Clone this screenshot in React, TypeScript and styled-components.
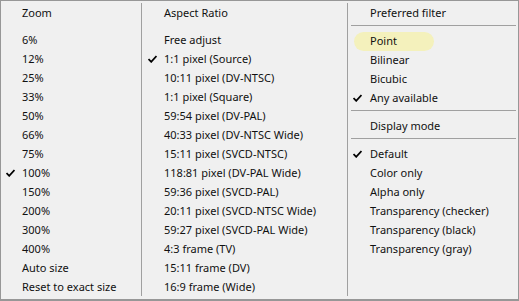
import React from "react";
import styled, { createGlobalStyle } from "styled-components";

const Global = createGlobalStyle`
  html, body { margin: 0; padding: 0; background: #f0f0f0; }
  body { font-family: "Noto Sans", "Open Sans", sans-serif; font-size: 11px; color: #111; }
`;

const Menu = styled.div`
  width: 519px;
  height: 301px;
  box-sizing: border-box;
  border: 1px solid #979797;
  border-bottom-width: 2px;
  background: #f0f0f0;
  display: flex;
  padding: 2px 0 3px;
`;

const Column = styled.div<{ $w: number }>`
  width: ${(p) => p.$w}px;
  display: flex;
  flex-direction: column;
`;

const Divider = styled.div`
  width: 1px;
  background: #a0a0a0;
  flex-shrink: 0;
`;

const Item = styled.div<{ $pad: number; $hl?: boolean }>`
  position: relative;
  height: 19px;
  line-height: 19px;
  padding-left: ${(p) => p.$pad}px;
  white-space: nowrap;
  &::before {
    content: "";
    display: ${(p) => (p.$hl ? "block" : "none")};
    position: absolute;
    left: 6px;
    top: 1px;
    width: 80px;
    height: 19px;
    border-radius: 10px;
    background: #f4f1bc;
  }
`;

const Label = styled.span`
  position: relative;
`;

const Check = styled.svg<{ $x: number }>`
  position: absolute;
  left: ${(p) => p.$x}px;
  top: 6px;
  width: 9px;
  height: 8px;
`;

const Sep = styled.div<{ $l: number; $r: number }>`
  height: 1px;
  background: #a0a0a0;
  margin: 3px ${(p) => p.$r}px 5px ${(p) => p.$l}px;
`;

type Entry = string | { t: string; c?: boolean; h?: boolean } | null;

const cols: { w: number; pad: number; cx: number; sl: number; sr: number; items: Entry[] }[] = [
  {
    w: 140,
    pad: 21,
    cx: 5,
    sl: 3,
    sr: 2,
    items: [
      "Zoom",
      null,
      "6%",
      "12%",
      "25%",
      "33%",
      "50%",
      "66%",
      "75%",
      { t: "100%", c: true },
      "150%",
      "200%",
      "300%",
      "400%",
      "Auto size",
      "Reset to exact size",
    ],
  },
  {
    w: 205,
    pad: 22,
    cx: 6,
    sl: 3,
    sr: 2,
    items: [
      "Aspect Ratio",
      null,
      "Free adjust",
      { t: "1:1 pixel (Source)", c: true },
      "10:11 pixel (DV-NTSC)",
      "1:1 pixel (Square)",
      "59:54 pixel (DV-PAL)",
      "40:33 pixel (DV-NTSC Wide)",
      "15:11 pixel (SVCD-NTSC)",
      "118:81 pixel (DV-PAL Wide)",
      "59:36 pixel (SVCD-PAL)",
      "20:11 pixel (SVCD-NTSC Wide)",
      "59:27 pixel (SVCD-PAL Wide)",
      "4:3 frame (TV)",
      "15:11 frame (DV)",
      "16:9 frame (Wide)",
    ],
  },
  {
    w: 170,
    pad: 22,
    cx: 5,
    sl: 3,
    sr: 2,
    items: [
      "Preferred filter",
      null,
      { t: "Point", h: true },
      "Bilinear",
      "Bicubic",
      { t: "Any available", c: true },
      null,
      "Display mode",
      null,
      { t: "Default", c: true },
      "Color only",
      "Alpha only",
      "Transparency (checker)",
      "Transparency (black)",
      "Transparency (gray)",
    ],
  },
];

const CheckMark = ({ x }: { x: number }) => (
  <Check $x={x} viewBox="0 0 9 8">
    <path d="M0.5 4 L3.2 6.8 L8.5 1" fill="none" stroke="#000" strokeWidth="1.8" />
  </Check>
);

export default function App() {
  return (
    <>
      <Global />
      <Menu>
        {cols.map((col, ci) => (
          <React.Fragment key={ci}>
            {ci > 0 && <Divider />}
            <Column $w={col.w}>
              {col.items.map((it, i) => {
                if (it === null) return <Sep key={i} $l={col.sl} $r={col.sr} />;
                const e = typeof it === "string" ? { t: it } : it;
                return (
                  <Item key={i} $pad={col.pad} $hl={e.h}>
                    {e.c && <CheckMark x={col.cx} />}
                    <Label>{e.t}</Label>
                  </Item>
                );
              })}
            </Column>
          </React.Fragment>
        ))}
      </Menu>
    </>
  );
}
